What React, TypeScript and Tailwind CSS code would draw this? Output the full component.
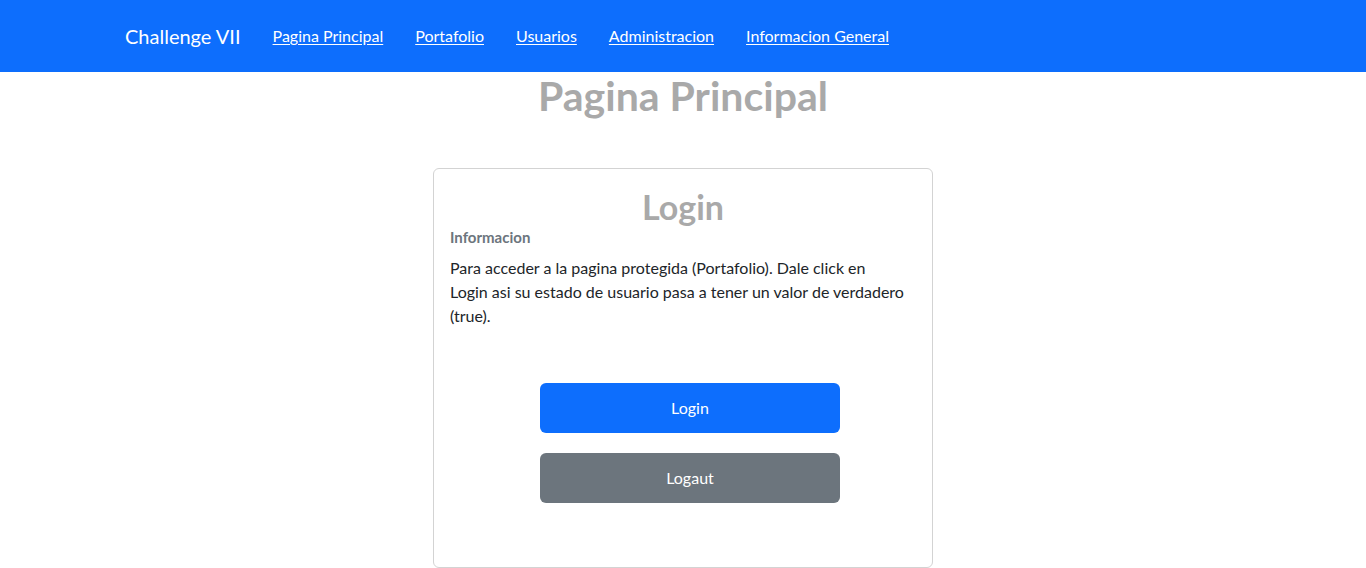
import * as React from "react";

const links = [
  "Pagina Principal",
  "Portafolio",
  "Usuarios",
  "Administracion",
  "Informacion General",
];

export default function App() {
  return (
    <div className="min-h-screen bg-white font-['Segoe_UI','Lato','Noto_Sans',sans-serif] text-[#212529]">
      <nav className="h-[72px] bg-[#0d6efd]">
        <div className="mx-auto flex h-full w-[1140px] items-center px-3">
          <a href="#" className="mr-4 text-xl text-white">
            Challenge VII
          </a>
          <div className="flex items-center">
            {links.map((l) => (
              <a
                key={l}
                href="#"
                className="px-4 text-base text-white underline underline-offset-2"
              >
                {l}
              </a>
            ))}
          </div>
        </div>
      </nav>

      <h1 className="h-[48px] text-center text-[41px] font-bold leading-[48px] text-[#a9a9a9]">
        Pagina Principal
      </h1>

      <div className="mx-auto mt-[48px] h-[400px] w-[500px] rounded-md border border-[#d3d3d3] px-4 pt-[19px]">
        <h2 className="h-[38px] text-center text-[34px] font-bold leading-[38px] text-[#a9a9a9]">
          Login
        </h2>
        <h6 className="mt-[2px] text-[15px] font-bold leading-[1.2] text-[#6c757d]">
          Informacion
        </h6>
        <p className="mt-[10px] text-base leading-6">
          Para acceder a la pagina protegida (Portafolio). Dale click en
          <br />
          Login asi su estado de usuario pasa a tener un valor de verdadero
          <br />
          (true).
        </p>
        <div className="mt-[55px] flex flex-col items-center gap-5 pl-[14px]">
          <button
            type="button"
            className="h-[50px] w-[300px] rounded-md bg-[#0d6efd] text-base text-white"
          >
            Login
          </button>
          <button
            type="button"
            className="h-[50px] w-[300px] rounded-md bg-[#6c757d] text-base text-white"
          >
            Logaut
          </button>
        </div>
      </div>
    </div>
  );
}
